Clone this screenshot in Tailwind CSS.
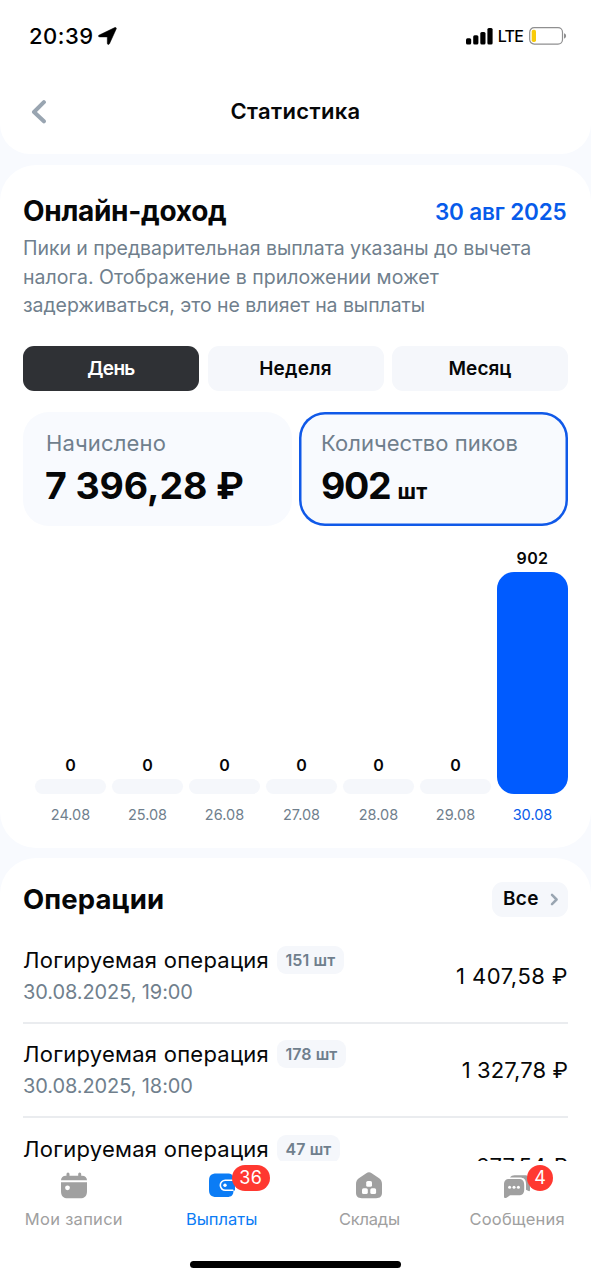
<!DOCTYPE html>
<html lang="ru">
<head>
<meta charset="utf-8">
<title>Статистика</title>
<script src="https://cdn.jsdelivr.net/npm/@tailwindcss/browser@4"></script>
</head>
<body class="bg-[#f8fafe]">
<div class="relative flex flex-col w-[591px] h-[1280px] overflow-hidden font-['Inter',sans-serif] text-[#060708] whitespace-nowrap">

  <header class="h-[154px] shrink-0 bg-white rounded-b-[30px]">
    <div class="h-[72px] flex items-center justify-between pl-[29px] pr-[24px]">
      <div class="flex items-center gap-[4px] text-black">
        <span class="text-[22px] font-medium tracking-[0.5px] leading-[72px]">20:39</span>
        <svg class="w-[19px] h-[18px]" viewBox="0 0 19 18"><path d="M1.300 8 16.800.6c1-.4 1.900.4 1.400 1.400L11.500 16.700c-.5 1.200-2.200.9-2.200-.5V9.900H1.700C.1 9.900-.1 8.700 1.300 8Z" fill="currentColor" stroke="currentColor" stroke-width=".5"/></svg>
      </div>
      <div class="flex items-center text-black">
        <svg class="w-[27px] h-[17px]" viewBox="0 0 27 17" fill="currentColor"><rect y="10.200" width="5.200" height="6.300" rx="1.500"/><rect x="7.200" y="7.300" width="5.200" height="9.200" rx="1.500"/><rect x="14.300" y="4" width="5.200" height="12.500" rx="1.500"/><rect x="21.400" y="0" width="5.200" height="16.500" rx="1.500"/></svg>
        <span class="text-[16px] font-medium tracking-[-0.8px] ml-[5px]">LTE</span>
        <svg class="w-[38px] h-[18px] ml-[6px]" viewBox="0 0 38 18"><rect x=".7" y=".7" width="32.800" height="16.400" rx="4.500" fill="none" stroke="#8f8f90" stroke-width="1.200"/><rect x="2.700" y="2.700" width="4.300" height="12.400" rx="1.800" fill="#f8cb0a"/><path d="M35 6.200c2.800.8 2.800 4.600 0 5.400Z" fill="#8f8f90"/></svg>
      </div>
    </div>
    <div class="h-[79px] grid grid-cols-[80px_1fr_80px] items-center">
      <svg class="w-[16px] h-[24px] ml-[31px]" viewBox="0 0 16 24"><path d="M12.900 2.200 3 12l9.900 9.300" fill="none" stroke="#99a5b1" stroke-width="4" stroke-linecap="round" stroke-linejoin="round"/></svg>
      <h1 class="text-center text-[22px] font-semibold tracking-[0.34px]">Статистика</h1>
    </div>
  </header>

  <section class="mt-[11px] h-[683px] shrink-0 bg-white rounded-[36px] pl-[23px] pr-[23px] pt-[29px]">
    <div class="flex items-center justify-between h-[34px]">
      <h2 class="text-[28px] font-bold tracking-[-0.3px]">Онлайн-доход</h2>
      <span class="text-[22.5px] font-semibold tracking-[-0.17px] text-[#075bea] pr-[1.500px] pt-[2px]">30 авг 2025</span>
    </div>
    <p class="mt-[6px] text-[19.5px] leading-[28.7px] tracking-[-0.05px] text-[#707f8d]">Пики и предварительная выплата указаны до вычета<br><span class="tracking-[0.01px]">налога. Отображение в приложении может</span><br><span class="tracking-[-0.07px]">задерживаться, это не влияет на выплаты</span></p>

    <div class="mt-[26px] grid grid-cols-3 gap-[8.500px] h-[45px] text-[19px] font-semibold text-center leading-[45px]">
      <div class="bg-[#2f3135] text-white rounded-[11px] tracking-[-0.7px]">День</div>
      <div class="bg-[#f5f7fb] rounded-[11px] tracking-[0.25px]">Неделя</div>
      <div class="bg-[#f5f7fb] rounded-[11px] tracking-[0.02px]">Месяц</div>
    </div>

    <div class="mt-[21px] flex gap-[7px] h-[114px]">
      <div class="w-[268.500px] bg-[#f8fafe] rounded-[26px] pl-[22px] pt-[17px]">
        <div class="text-[22px] leading-[29px] tracking-[0.15px] text-[#707f8d] pl-[1px]">Начислено</div>
        <div class="text-[37.5px] leading-[56px] font-bold tracking-[-0.1px]">7 396,28 ₽</div>
      </div>
      <div class="flex-1 bg-[#f8fafe] rounded-[26px] shadow-[inset_0_0_0_2.500px_#1059e8] pl-[22.500px] pt-[17px]">
        <div class="text-[22px] leading-[29px] tracking-[0.04px] text-[#707f8d]">Количество пиков</div>
        <div class="flex items-baseline gap-[7px] leading-[56px] font-bold"><span class="text-[37.5px] tracking-[-1.3px]">902</span><span class="text-[21.5px] tracking-[0.5px]">шт</span></div>
      </div>
    </div>

    <div class="mt-[18px] ml-[12px] grid grid-cols-7 gap-x-[6px] h-[282px] text-center">
      <div class="flex flex-col justify-end"><b class="text-[16px] leading-[28px] font-semibold">0</b><i class="block h-[15px] rounded-[8px] bg-[#f5f7fb]"></i><span class="text-[14.5px] leading-[34px] pt-[4px] text-[#707f8d]">24.08</span></div>
      <div class="flex flex-col justify-end"><b class="text-[16px] leading-[28px] font-semibold">0</b><i class="block h-[15px] rounded-[8px] bg-[#f5f7fb]"></i><span class="text-[14.5px] leading-[34px] pt-[4px] text-[#707f8d]">25.08</span></div>
      <div class="flex flex-col justify-end"><b class="text-[16px] leading-[28px] font-semibold">0</b><i class="block h-[15px] rounded-[8px] bg-[#f5f7fb]"></i><span class="text-[14.5px] leading-[34px] pt-[4px] text-[#707f8d]">26.08</span></div>
      <div class="flex flex-col justify-end"><b class="text-[16px] leading-[28px] font-semibold">0</b><i class="block h-[15px] rounded-[8px] bg-[#f5f7fb]"></i><span class="text-[14.5px] leading-[34px] pt-[4px] text-[#707f8d]">27.08</span></div>
      <div class="flex flex-col justify-end"><b class="text-[16px] leading-[28px] font-semibold">0</b><i class="block h-[15px] rounded-[8px] bg-[#f5f7fb]"></i><span class="text-[14.5px] leading-[34px] pt-[4px] text-[#707f8d]">28.08</span></div>
      <div class="flex flex-col justify-end"><b class="text-[16px] leading-[28px] font-semibold">0</b><i class="block h-[15px] rounded-[8px] bg-[#f5f7fb]"></i><span class="text-[14.5px] leading-[34px] pt-[4px] text-[#707f8d]">29.08</span></div>
      <div class="flex flex-col justify-end"><b class="text-[16px] leading-[28px] font-semibold tracking-[0.36px]">902</b><i class="block h-[222px] rounded-[17px] bg-[#005bff]"></i><span class="text-[14.5px] leading-[34px] pt-[4px] text-[#075bea]">30.08</span></div>
    </div>
  </section>

  <section class="mt-[10px] h-[303px] shrink-0 bg-white rounded-t-[36px] px-[23px] pt-[24px] overflow-hidden">
    <div class="flex items-center justify-between h-[35px]">
      <h2 class="text-[27.5px] font-bold tracking-[0.12px]">Операции</h2>
      <div class="flex items-center gap-[11px] h-[35px] w-[76px] rounded-[11px] bg-[#f5f7fb] pl-[11px] text-[19px] font-semibold tracking-[0.3px]">Все<svg class="w-[9px] h-[13px] shrink-0" viewBox="0 0 9 13"><path d="m2 1.900 4.600 4.600L2 11.100" fill="none" stroke="#99a5b1" stroke-width="2.500" stroke-linecap="round" stroke-linejoin="round"/></svg></div>
    </div>
    <div class="mt-[12px]">
      <div class="flex items-center justify-between h-[95px] border-b-2 border-[#eaecef]">
        <div>
          <div class="flex items-center h-[32px] gap-[8px]"><span class="text-[22px] tracking-[0.24px] pt-px">Логируемая операция</span><span class="h-[28px] leading-[28px] px-[8.500px] rounded-[9px] bg-[#f5f7fb] text-[16px] font-semibold tracking-[0.1px] text-[#707f8d]">151 шт</span></div>
          <div class="h-[32px] leading-[32px] text-[20px] tracking-[-0.1px] text-[#707f8d]">30.08.2025, 19:00</div>
        </div>
        <span class="text-[22px] tracking-[0.5px] pt-px">1 407,58 ₽</span>
      </div>
      <div class="flex items-center justify-between h-[94px] border-b-2 border-[#eaecef]">
        <div>
          <div class="flex items-center h-[32px] gap-[8px]"><span class="text-[22px] tracking-[0.24px] pt-px">Логируемая операция</span><span class="h-[28px] leading-[28px] px-[8.500px] rounded-[9px] bg-[#f5f7fb] text-[16px] font-semibold tracking-[0.05px] text-[#707f8d]">178 шт</span></div>
          <div class="h-[32px] leading-[32px] text-[20px] tracking-[-0.1px] text-[#707f8d]">30.08.2025, 18:00</div>
        </div>
        <span class="text-[22px] tracking-[0.1px] pt-px">1 327,78 ₽</span>
      </div>
      <div class="flex justify-between h-[95px] pt-[15px]">
        <div class="flex items-center h-[32px] gap-[8px]"><span class="text-[22px] tracking-[0.24px] pt-px">Логируемая операция</span><span class="h-[28px] leading-[28px] px-[8.500px] rounded-[9px] bg-[#f5f7fb] text-[16px] font-semibold tracking-[0.1px] text-[#707f8d]">47 шт</span></div>
        <span class="text-[22px] leading-[32px] tracking-[0.1px] pt-[17px]">677,54 ₽</span>
      </div>
    </div>
  </section>

  <nav class="h-[119px] shrink-0 bg-white flex flex-col">
    <div class="grid grid-cols-4 h-[99px] text-[16.5px] text-[#a0a0a0] text-center">
      <div class="flex flex-col items-center pt-[11px]">
        <svg class="w-[26px] h-[27px]" viewBox="0 0 26 27" fill="#a0a0a0"><path d="M0 8.300C0 5.500 2 3.700 4.800 3.700H5.500V2a1.500 1.500 0 0 1 3 0v1.700h8.700V2a1.500 1.500 0 0 1 3 0v1.700h.9C24 3.700 26 5.500 26 8.300ZM0 10.200h26v8.700c0 5.200-2 7.300-7.200 7.300H7.200C2 26.200 0 24.100 0 18.900Z"/><circle cx="6.500" cy="15.800" r="2.400" fill="#fff"/></svg>
        <span class="mt-[8px] leading-[24px] tracking-[0.28px]">Мои записи</span>
      </div>
      <div class="flex flex-col items-center pt-[11px] text-[#0b7cf5]">
        <div class="relative w-[26px] h-[27px]">
          <svg class="w-[26px] h-[27px]" viewBox="0 0 26 27"><path d="M7.500 1.500H18c5 0 6.500 1.800 6.500 6v11c0 4.500-2 6.500-6.500 6.500H7.500C2 25 0 23 0 17.500V9C0 3.500 2 1.500 7.500 1.500Z" fill="#0b7cf5"/><path d="M16 7.500h10v11H16Z" fill="#0b7cf5"/><path d="M25 8.300h-8.700a5 5 0 0 0 0 10h7.500" fill="none" stroke="#fff" stroke-width="1.600" stroke-linecap="round"/><circle cx="16" cy="13.300" r="1.700" fill="#fff"/></svg>
          <span class="absolute left-[23.500px] -top-[7px] w-[37.500px] h-[26px] rounded-full bg-[#ff3830] text-white text-[18px] leading-[26px] tracking-[0.6px]">36</span>
        </div>
        <span class="mt-[8px] leading-[24px]">Выплаты</span>
      </div>
      <div class="flex flex-col items-center pt-[11px]">
        <svg class="w-[26px] h-[27px]" viewBox="0 0 26 27"><path d="M10.300 1.200c1.700-1.300 3.700-1.300 5.400 0l6.700 4.500C25 7.500 26 9.300 26 12v8.500c0 4-1.900 5.700-5.800 5.700H5.800C1.900 26.200 0 24.500 0 20.500V12c0-2.700 1-4.500 3.600-6.300Z" fill="#a0a0a0"/><g fill="#fff"><rect x="10.200" y="9" width="5.800" height="5.800" rx="1.600"/><rect x="6" y="16.200" width="5.800" height="5.800" rx="1.600"/><rect x="14.300" y="16.200" width="5.800" height="5.800" rx="1.600"/></g></svg>
        <span class="mt-[8px] leading-[24px] tracking-[-0.22px]">Склады</span>
      </div>
      <div class="flex flex-col items-center pt-[11px]">
        <div class="relative w-[26px] h-[27px]">
          <svg class="w-[26px] h-[27px]" viewBox="0 0 26 27"><path d="M6 5.500C7 4 8.500 3.200 10.500 3.200h10c3.500 0 5.500 2 5.500 5.500v9.500c0 1.200-1 1.300-2 .6l-2-1V12c0-4.500-2-6.500-6.500-6.500Z" fill="#a0a0a0"/><path d="M5.500 7h9c4 0 5.700 1.800 5.700 5.800v4.700c0 4-1.700 5.800-5.700 5.800H7c-1 0-1.500.3-2.300 1l-2.200 1.400C1.200 26.500 0 26 0 24.500V12.800C0 8.800 1.500 7 5.500 7Z" fill="#a0a0a0"/><g fill="#fff"><circle cx="5.600" cy="15.300" r="1.500"/><circle cx="10" cy="15.300" r="1.500"/><circle cx="14.400" cy="15.300" r="1.500"/></g></svg>
          <span class="absolute left-[23px] -top-[7px] w-[26px] h-[26px] rounded-full bg-[#ff3830] text-white text-[18px] leading-[26px]">4</span>
        </div>
        <span class="mt-[8px] leading-[24px] tracking-[0.2px]">Сообщения</span>
      </div>
    </div>
    <div class="w-[211px] h-[7px] mt-[1px] ml-[190px] rounded-full bg-black"></div>
  </nav>
</div>
</body>
</html>
